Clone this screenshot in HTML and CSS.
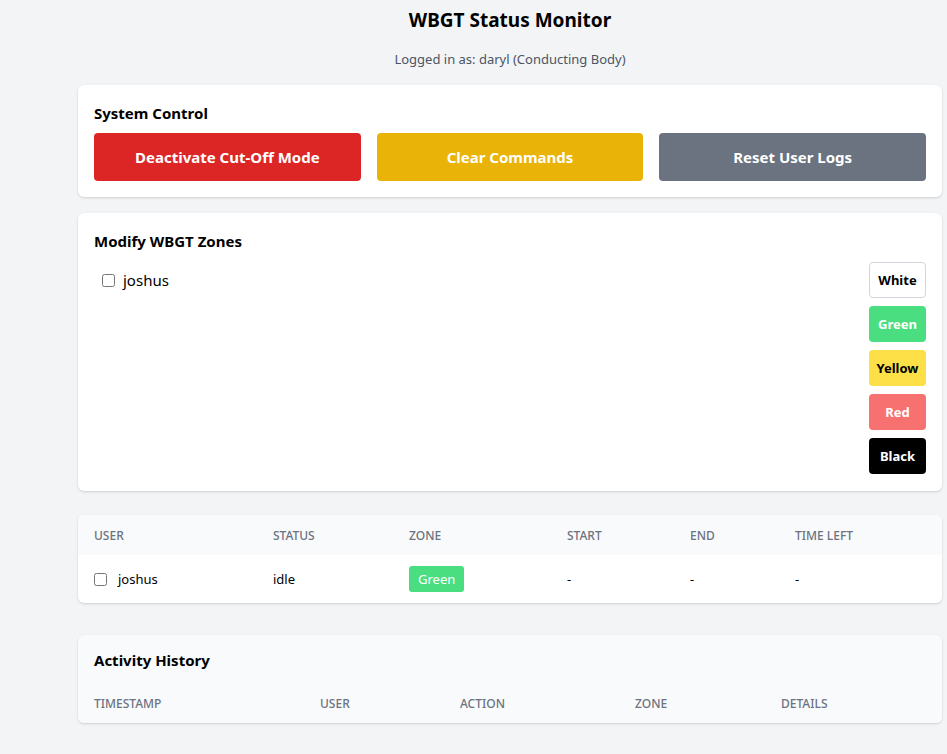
FILE: index.html
```html
<!DOCTYPE html>
<html lang="en">
<head>
<meta charset="utf-8">
<title>WBGT Status Monitor</title>
<link rel="stylesheet" href="styles.css">
</head>
<body>
<div class="page">
  <header class="top">
    <h1 class="title">WBGT Status Monitor</h1>
    <p class="login">Logged in as: daryl (Conducting Body)</p>
  </header>

  <section class="card card-control">
    <h2 class="card-title">System Control</h2>
    <div class="control-row">
      <button class="btn btn-red">Deactivate Cut-Off Mode</button>
      <button class="btn btn-yellow">Clear Commands</button>
      <button class="btn btn-gray">Reset User Logs</button>
    </div>
  </section>

  <section class="card card-zones">
    <h2 class="card-title">Modify WBGT Zones</h2>
    <div class="zones-body">
      <div class="user-list">
        <label class="user-item"><input type="checkbox" class="chk"> <span>joshus</span></label>
      </div>
      <div class="zone-buttons">
        <button class="zbtn z-white">White</button>
        <button class="zbtn z-green">Green</button>
        <button class="zbtn z-yellow">Yellow</button>
        <button class="zbtn z-red">Red</button>
        <button class="zbtn z-black">Black</button>
      </div>
    </div>
  </section>

  <section class="card card-table">
    <table class="tbl users">
      <thead>
        <tr>
          <th class="c-user">User</th>
          <th class="c-status">Status</th>
          <th class="c-zone">Zone</th>
          <th class="c-start">Start</th>
          <th class="c-end">End</th>
          <th class="c-left">Time Left</th>
        </tr>
      </thead>
      <tbody>
        <tr>
          <td><label class="cell-user"><input type="checkbox" class="chk"><span>joshus</span></label></td>
          <td>idle</td>
          <td><span class="badge">Green</span></td>
          <td>-</td>
          <td>-</td>
          <td>-</td>
        </tr>
      </tbody>
    </table>
  </section>

  <section class="card card-history">
    <h2 class="card-title history-title">Activity History</h2>
    <table class="tbl history">
      <thead>
        <tr>
          <th class="h-ts">Timestamp</th>
          <th class="h-user">User</th>
          <th class="h-action">Action</th>
          <th class="h-zone">Zone</th>
          <th class="h-details">Details</th>
        </tr>
      </thead>
    </table>
  </section>
</div>
</body>
</html>
```

FILE: styles.css
```css
* { box-sizing: border-box; }

html, body {
  margin: 0;
  padding: 0;
}

body {
  background: #f3f4f6;
  font-family: "Noto Sans", "Open Sans", "Liberation Sans", sans-serif;
  color: #000;
}

.page {
  width: 864px;
  margin-left: 78px;
  padding-top: 7px;
  padding-bottom: 30px;
}

.top {
  text-align: center;
}

.title {
  margin: 0;
  font-size: 19px;
  line-height: 26px;
  font-weight: 700;
}

.login {
  margin: 17px 0 0;
  font-size: 13px;
  line-height: 18px;
  color: #4b5563;
}

.card {
  background: #fff;
  border-radius: 6px;
  box-shadow: 0 1px 3px rgba(0,0,0,0.10), 0 1px 2px rgba(0,0,0,0.06);
}

.card-title {
  margin: 0;
  font-size: 15px;
  line-height: 24px;
  font-weight: 700;
}

.card-control {
  margin-top: 17px;
  padding: 16px;
}

.control-row {
  display: flex;
  gap: 16px;
  margin-top: 8px;
}

.btn {
  flex: 1;
  height: 48px;
  border: 0;
  border-radius: 4px;
  color: #fff;
  font-family: inherit;
  font-size: 15px;
  font-weight: 700;
}

.btn-red { background: #dc2626; }
.btn-yellow { background: #eab308; }
.btn-gray { background: #6b7280; }

.card-zones {
  margin-top: 16px;
  padding: 16px 16px 17px;
}

.zones-body {
  display: flex;
  justify-content: space-between;
  margin-top: 9px;
}

.user-list {
  padding: 8px;
}

.user-item {
  display: flex;
  align-items: center;
  gap: 8px;
  font-size: 15px;
  line-height: 20px;
}

.chk {
  width: 13px;
  height: 13px;
  margin: 0;
  accent-color: #6b7280;
}

.zone-buttons {
  display: flex;
  flex-direction: column;
  gap: 8px;
  width: 57px;
}

.zbtn {
  height: 36px;
  border: 1px solid transparent;
  border-radius: 4px;
  font-family: inherit;
  font-size: 13px;
  font-weight: 700;
  padding: 0;
}

.z-white { background: #fff; border-color: #d1d5db; color: #000; }
.z-green { background: #4ade80; color: #fff; }
.z-yellow { background: #fde047; color: #000; }
.z-red { background: #f87171; color: #fff; }
.z-black { background: #000; color: #fff; }

.card-table {
  margin-top: 24px;
  overflow: hidden;
}

.tbl {
  width: 100%;
  border-collapse: collapse;
  table-layout: fixed;
}

.tbl th {
  text-align: left;
  font-weight: 500;
  font-size: 12px;
  text-transform: uppercase;
  color: #6b7280;
  height: 40px;
  padding: 0 16px;
  background: #f9fafb;
}

.tbl td {
  height: 48px;
  padding: 0 16px;
  font-size: 13px;
  color: #000;
}

.c-user { width: 179px; }
.c-status { width: 136px; }
.c-zone { width: 158px; }
.c-start { width: 123px; }
.c-end { width: 105px; }
.c-left { width: auto; }

.cell-user {
  display: flex;
  align-items: center;
  gap: 11px;
}

.badge {
  display: inline-block;
  background: #4ade80;
  color: #fff;
  font-size: 13px;
  line-height: 26px;
  padding: 0 9px;
  border-radius: 3px;
}

.card-history {
  margin-top: 32px;
  background: #f9fafb;
  padding-top: 16px;
  overflow: hidden;
}

.history-title {
  padding: 0 16px;
  line-height: 18px;
  margin-bottom: 14px;
}

.h-ts { width: 226px; }
.h-user { width: 140px; }
.h-action { width: 175px; }
.h-zone { width: 146px; }
.h-details { width: auto; }
```
